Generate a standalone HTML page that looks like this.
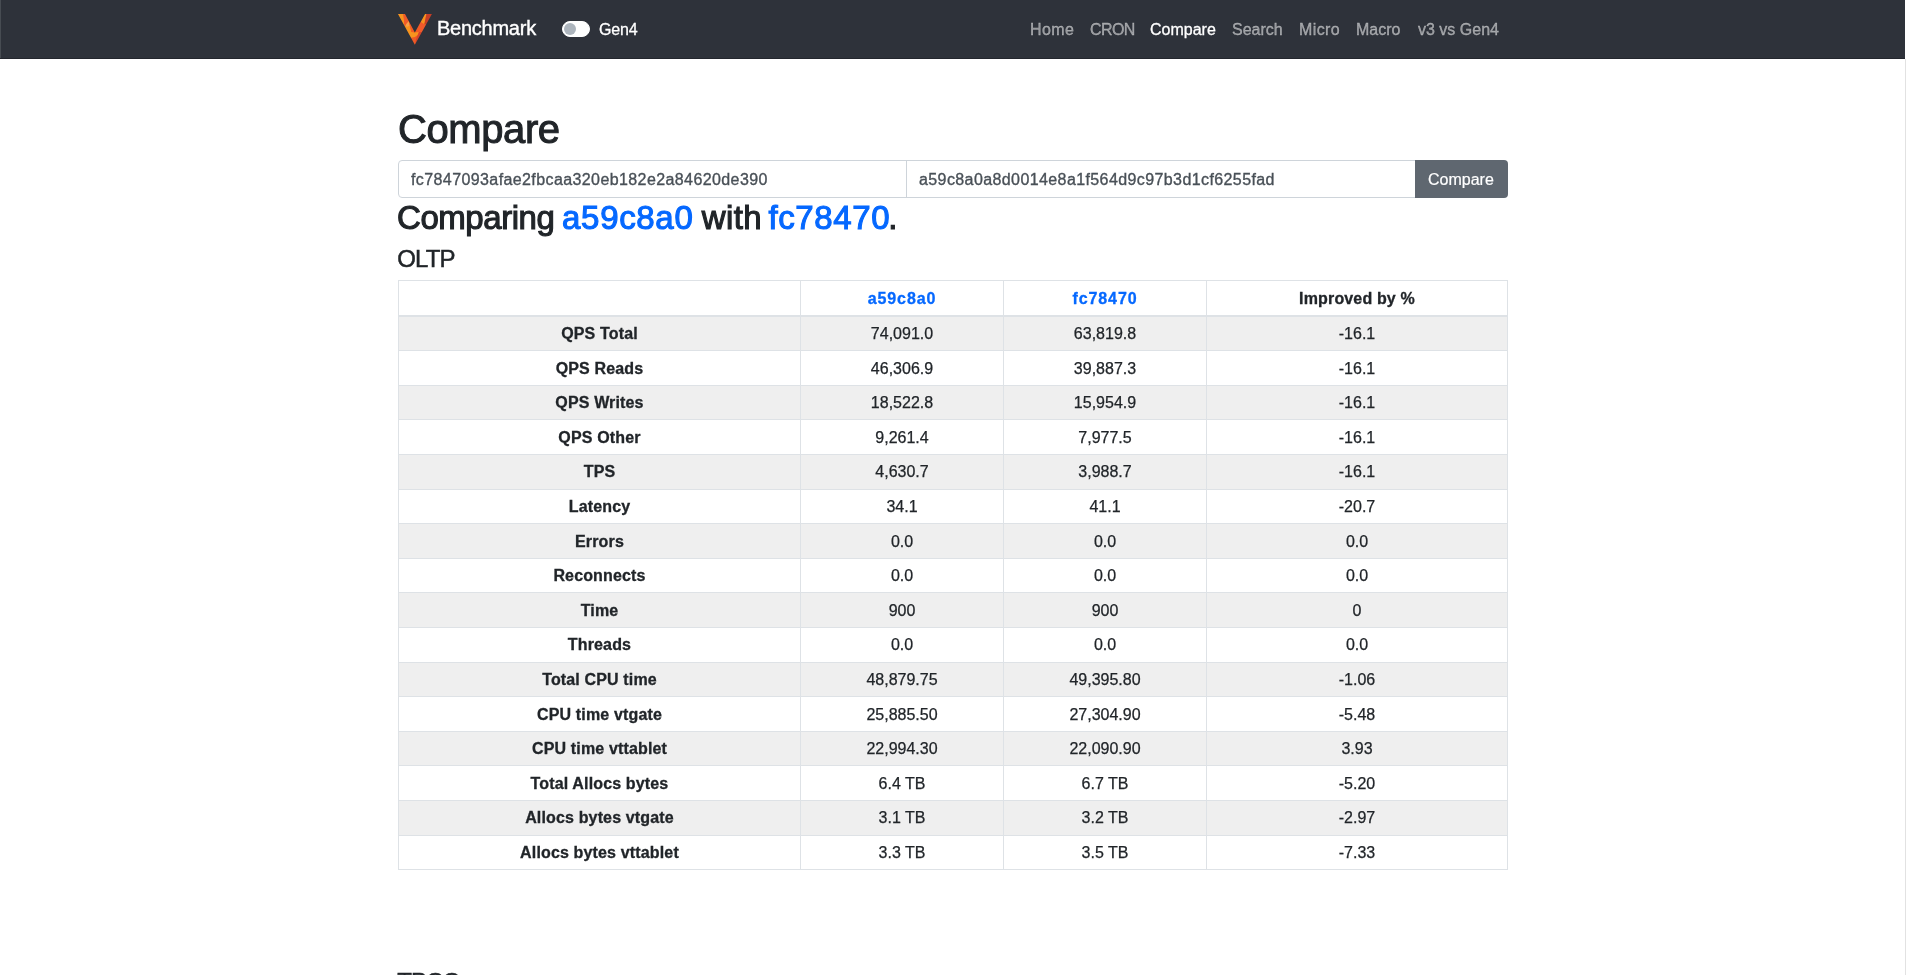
<!DOCTYPE html>
<html><head><meta charset="utf-8"><title>Compare</title>
<style>
html,body{margin:0;padding:0;background:#fff;}
body{font-family:"Liberation Sans",sans-serif;color:#212529;width:1906px;height:975px;overflow:hidden;position:relative;}
.abs{position:absolute;white-space:nowrap;}
#nav{position:absolute;left:0;top:0;width:1905px;height:58px;background:#2e323a;border-bottom:1px solid #23262d;}
.nl{position:absolute;top:20px;font-size:16px;line-height:20px;color:rgba(255,255,255,.5);white-space:nowrap;-webkit-text-stroke:0.3px rgba(255,255,255,.5);}
.nl.active{-webkit-text-stroke:0.3px #fff;}
.nl.active{color:#fff;}
#brand{left:437px;top:16px;font-size:20px;line-height:24px;color:#fff;letter-spacing:-0.25px;-webkit-text-stroke:0.4px #fff;}
#sw{position:absolute;left:562px;top:21px;width:26px;height:14px;border:1px solid #fff;border-radius:8px;background:#fff;}
#knob{position:absolute;left:1px;top:1px;width:12px;height:12px;border-radius:50%;background:#adb5bd;}
#gen4{left:599px;top:20px;font-size:16px;line-height:20px;color:#fff;letter-spacing:-0.2px;-webkit-text-stroke:0.3px #fff;}
h1{position:absolute;left:398px;top:105px;margin:0;font-size:40px;line-height:48px;font-weight:400;white-space:nowrap;-webkit-text-stroke:1px #212529;letter-spacing:-0.4px;}
.ig{position:absolute;top:160px;height:38px;box-sizing:border-box;border:1px solid #ced4da;background:#fff;}
.igt{position:absolute;top:9px;left:12px;font-size:16px;line-height:20px;color:#495057;white-space:nowrap;letter-spacing:0.4px;-webkit-text-stroke:0.35px #495057;}
#btn{position:absolute;left:1415px;top:160px;width:93px;height:38px;box-sizing:border-box;background:#5f6770;border-radius:0 4px 4px 0;color:#fff;font-size:16px;}
.h2w{position:absolute;top:199px;font-size:33px;line-height:38px;white-space:nowrap;letter-spacing:-0.45px;-webkit-text-stroke:1.1px #212529;color:#212529;}
.h2w.bl{color:#0568ff;-webkit-text-stroke:1.1px #0568ff;}
.h4w{position:absolute;left:397.25px;font-size:24px;line-height:29px;white-space:nowrap;letter-spacing:-0.9px;-webkit-text-stroke:0.5px #212529;}
table{position:absolute;left:398px;top:280px;width:1109px;border-collapse:collapse;font-size:16px;table-layout:fixed;}
td,th{border:1px solid #dee2e6;padding:5.5px 4.8px 4.1px;line-height:24px;text-align:center;}
td{-webkit-text-stroke:0.25px #212529;}
tbody td:first-child{-webkit-text-stroke:0.3px #212529;letter-spacing:0.15px;}
th{-webkit-text-stroke:0.3px #212529;letter-spacing:0.15px;}
th a{-webkit-text-stroke:0.3px #0568ff;}
th{font-weight:700;}
thead th{border-bottom-width:2px;padding-top:6px;padding-bottom:3.6px;}
thead th a{color:#0568ff;text-decoration:none;letter-spacing:0.9px;}
tbody tr:nth-of-type(odd){background:#efefef;}
tbody td:first-child{font-weight:700;}
</style></head><body>
<div id="wrap" style="position:absolute;left:0;top:0;width:1906px;height:975px;will-change:transform">
<div id="nav">
  <svg class="abs" style="left:396px;top:12px" width="38" height="35" viewBox="0 0 1059 975">
    <defs><mask id="vc" maskUnits="userSpaceOnUse" x="0" y="0" width="1059" height="975"><polygon points="55,55 250,55 525,570 810,55 1000,55 525,910" fill="#fff"/></mask></defs>
    <g mask="url(#vc)">
      <rect x="0" y="0" width="1059" height="975" fill="#f15a2b"/>
      <polygon points="0,0 200,0 240,390 354,250 430,560 525,570 640,560 600,650 525,700 470,720 0,720" fill="#f7941e"/>
      <polygon points="260,330 354,250 380,380 300,420" fill="#f8a048"/>
      <polygon points="200,0 650,0 650,50 354,250 240,390" fill="#ef5a2a"/>
      <polygon points="354,250 650,50 650,560 430,560" fill="#f15a24"/>
      <polygon points="810,0 860,0 790,340 690,280" fill="#f7931e"/>
      <polygon points="860,0 1059,0 1059,350 790,340" fill="#c63e26"/>
      <polygon points="440,720 525,700 600,650 640,700 600,975 440,975" fill="#ef5a25"/>
      <polygon points="640,560 1059,560 1059,975 525,975 560,760" fill="#d5452a"/>
    </g>
  </svg>
  <div class="abs" id="brand">Benchmark</div>
  <div id="sw"><div id="knob"></div></div>
  <div class="abs" id="gen4">Gen4</div>
  <div class="nl" style="left:1030px;letter-spacing:0.4px">Home</div>
  <div class="nl" style="left:1090px;letter-spacing:-0.6px">CRON</div>
  <div class="nl active" style="left:1150px">Compare</div>
  <div class="nl" style="left:1232px">Search</div>
  <div class="nl" style="left:1299px;letter-spacing:0.4px">Micro</div>
  <div class="nl" style="left:1356px">Macro</div>
  <div class="nl" style="left:1418px">v3 vs Gen4</div>
</div>
<h1>Compare</h1>
<div class="ig" style="left:398px;width:509px;border-radius:4px 0 0 4px;"><span class="igt">fc7847093afae2fbcaa320eb182e2a84620de390</span></div>
<div class="ig" style="left:906px;width:510px;"><span class="igt">a59c8a0a8d0014e8a1f564d9c97b3d1cf6255fad</span></div>
<div id="btn"><span class="abs" style="left:13px;top:10px;line-height:20px;-webkit-text-stroke:0.2px #fff">Compare</span></div>
<div class="h2w" style="left:397px">Comparing</div><div class="h2w bl" style="left:562.1px;letter-spacing:0.67px">a59c8a0</div><div class="h2w" style="left:701.7px;letter-spacing:0.4px">with</div><div class="h2w bl" style="left:768.5px;letter-spacing:0.6px">fc78470</div><div class="h2w" style="left:888.2px">.</div>
<div class="h4w" style="top:244px">OLTP</div>
<table>
<colgroup><col style="width:402px"><col style="width:203px"><col style="width:203px"><col style="width:301px"></colgroup>
<thead><tr><th></th><th><a>a59c8a0</a></th><th><a>fc78470</a></th><th>Improved by %</th></tr></thead>
<tbody>
<tr><td>QPS Total</td><td>74,091.0</td><td>63,819.8</td><td>-16.1</td></tr>
<tr><td>QPS Reads</td><td>46,306.9</td><td>39,887.3</td><td>-16.1</td></tr>
<tr><td>QPS Writes</td><td>18,522.8</td><td>15,954.9</td><td>-16.1</td></tr>
<tr><td>QPS Other</td><td>9,261.4</td><td>7,977.5</td><td>-16.1</td></tr>
<tr><td>TPS</td><td>4,630.7</td><td>3,988.7</td><td>-16.1</td></tr>
<tr><td>Latency</td><td>34.1</td><td>41.1</td><td>-20.7</td></tr>
<tr><td>Errors</td><td>0.0</td><td>0.0</td><td>0.0</td></tr>
<tr><td>Reconnects</td><td>0.0</td><td>0.0</td><td>0.0</td></tr>
<tr><td>Time</td><td>900</td><td>900</td><td>0</td></tr>
<tr><td>Threads</td><td>0.0</td><td>0.0</td><td>0.0</td></tr>
<tr><td>Total CPU time</td><td>48,879.75</td><td>49,395.80</td><td>-1.06</td></tr>
<tr><td>CPU time vtgate</td><td>25,885.50</td><td>27,304.90</td><td>-5.48</td></tr>
<tr><td>CPU time vttablet</td><td>22,994.30</td><td>22,090.90</td><td>3.93</td></tr>
<tr><td>Total Allocs bytes</td><td>6.4 TB</td><td>6.7 TB</td><td>-5.20</td></tr>
<tr><td>Allocs bytes vtgate</td><td>3.1 TB</td><td>3.2 TB</td><td>-2.97</td></tr>
<tr><td>Allocs bytes vttablet</td><td>3.3 TB</td><td>3.5 TB</td><td>-7.33</td></tr>
</tbody>
</table>
<div class="h4w" style="top:967px">TPCC</div>
<div style="position:absolute;left:0;top:0;width:1px;height:58px;background:#474c52"></div>
<div style="position:absolute;left:1905px;top:59px;width:1px;height:916px;background:#e2e2e2"></div>
</div>
</body></html>
